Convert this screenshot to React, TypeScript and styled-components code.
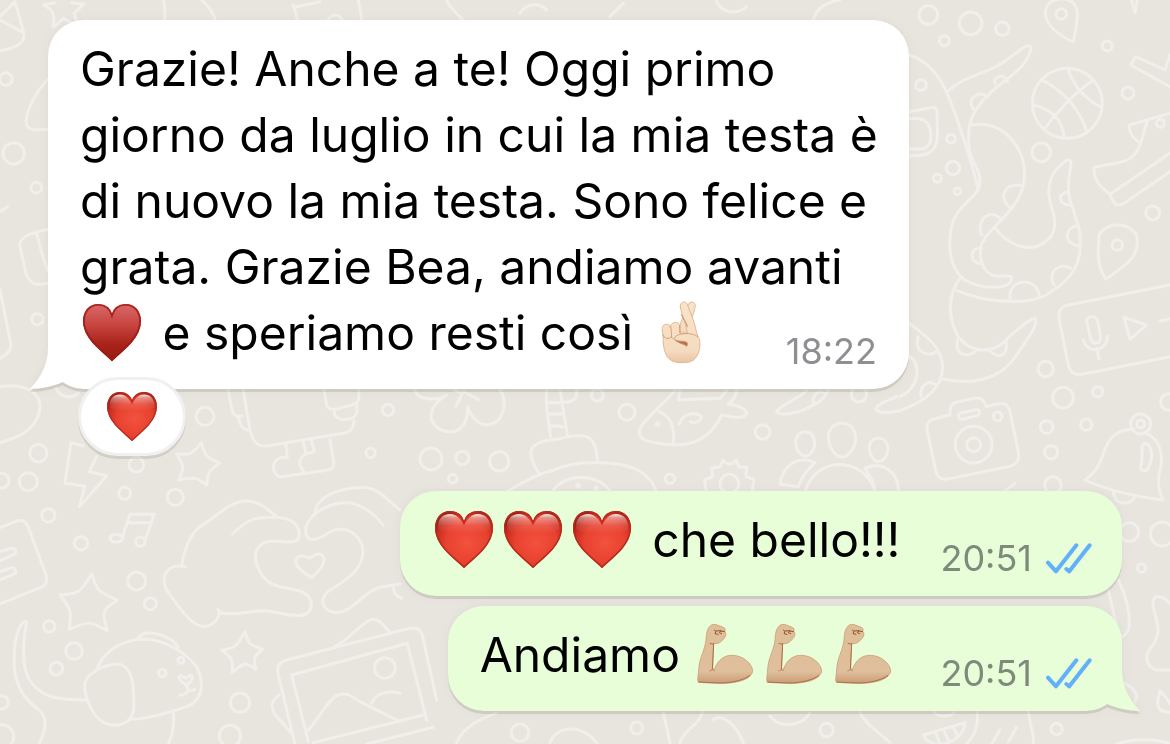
import React from "react";
import styled, { createGlobalStyle } from "styled-components";

const GlobalStyle = createGlobalStyle`
  * { box-sizing: border-box; }
  body { margin: 0; background: #e8e5de; font-family: Inter, "Liberation Sans", sans-serif; }
`;

const Stage = styled.main`
  display: grid;
  min-height: 100vh;
  overflow: hidden;
`;

const WallpaperArt = styled.svg`
  grid-area: 1 / 1;
  width: 100%;
  height: 100%;
  fill: none;
  stroke: #f1efeb;
  stroke-width: 9px;
  stroke-linecap: round;
  stroke-linejoin: round;
`;

const Conversation = styled.section`
  grid-area: 1 / 1;
  display: flex;
  flex-direction: column;
  align-items: flex-start;
  padding: 20px 48px 32px;
`;

const Bubble = styled.article<{ $own?: boolean }>`
  display: flex;
  align-items: flex-end;
  justify-content: space-between;
  gap: 40px;
  align-self: ${(p) => (p.$own ? "flex-end" : "flex-start")};
  padding: 16px ${(p) => (p.$own ? 30 : 32)}px 16px 32px;
  border-radius: 36px;
  background: ${(p) => (p.$own ? "#e7fed8" : "#ffffff")};
  color: ${(p) => (p.$own ? "#7f8b7a" : "#8e8e93")};
  filter: drop-shadow(0 3px 0 rgba(80, 70, 60, 0.14)) drop-shadow(0 0 4px rgba(80, 70, 60, 0.06));
`;

const IncomingBubble = styled(Bubble)`
  display: grid;
  grid-template-columns: minmax(0, 1fr);
  width: min(861px, 100%);
`;

const Message = styled.p`
  grid-area: 1 / 1;
  margin: 0 0 7px;
  color: #000;
  font-size: 48px;
  line-height: 66px;
  white-space: nowrap;
`;

const Meta = styled.div`
  grid-area: 1 / 1;
  justify-self: end;
  align-self: end;
  display: flex;
  align-items: center;
  gap: 14px;
  font-size: 36px;
  line-height: 44px;
`;

const Replies = styled.div`
  display: flex;
  flex-direction: column;
  gap: 10px;
  align-self: stretch;
  margin-top: 35px;
`;

const Reaction = styled.button`
  display: flex;
  align-items: center;
  justify-content: center;
  width: 108px;
  height: 79px;
  margin: -12px 0 0 30px;
  padding: 0;
  border: 3px solid #f0f0f1;
  border-radius: 40px;
  background: #fff;
  filter: drop-shadow(0 3px 0 rgba(80, 70, 60, 0.14));
`;

const Emoji = styled.svg`
  width: 69px;
  height: 66px;
  vertical-align: top;
`;

const SmallEmoji = styled.svg`
  width: 50px;
  height: 49px;
`;

const TickIcon = styled.svg`
  width: 46px;
  height: 31px;
  fill: none;
  stroke: #62affa;
  stroke-width: 12px;
  stroke-linecap: round;
  stroke-linejoin: round;
`;

const TailShape = styled.svg<{ $own?: boolean }>`
  position: absolute;
  bottom: 0;
  ${(p) => (p.$own ? "right: -18px; transform: scaleX(-1);" : "left: -18px;")}
  width: 50px;
  height: 44px;
  fill: ${(p) => (p.$own ? "#e7fed8" : "#ffffff")};
`;

const Tail = ({ own }: { own?: boolean }) => (
  <TailShape $own={own} viewBox="0 0 50 44" aria-hidden="true">
    <path d="M18 0V2C18 20 11 32 0 44C12 44 24 41 33 37L50 20V0Z" />
  </TailShape>
);

const HEART =
  "M32 61C26 55 18 49 12 42C7 36 3 29 3 21C3 11 9 4 18 4C25 4 30 8 32 15C34 8 39 4 46 4C55 4 61 11 61 21C61 29 57 36 52 42C46 49 38 55 32 61Z";

const EmojiPaints = () => (
  <defs>
    <radialGradient id="red" cx="0.55" cy="0.55" r="0.6">
      <stop offset="0" stopColor="#f2523f" />
      <stop offset="0.6" stopColor="#e8412f" />
      <stop offset="0.85" stopColor="#cb2f20" />
      <stop offset="1" stopColor="#9c1d12" />
    </radialGradient>
    <linearGradient id="gloss" x1="0" y1="0" x2="0" y2="1">
      <stop offset="0" stopColor="#fff" stopOpacity="0.9" />
      <stop offset="0.2" stopColor="#fff" stopOpacity="0.45" />
      <stop offset="0.6" stopColor="#fff" stopOpacity="0.12" />
      <stop offset="1" stopColor="#fff" stopOpacity="0" />
    </linearGradient>
    <linearGradient id="suit" x1="0" y1="0" x2="0" y2="1">
      <stop offset="0" stopColor="#d9696a" />
      <stop offset="0.35" stopColor="#c94642" />
      <stop offset="0.7" stopColor="#a9231b" />
      <stop offset="1" stopColor="#981a10" />
    </linearGradient>
    <linearGradient id="suitEdge" x1="0" y1="0" x2="0" y2="1">
      <stop offset="0" stopColor="#ab2422" />
      <stop offset="1" stopColor="#981a10" />
    </linearGradient>
    <linearGradient id="palm" x1="0" y1="0" x2="0" y2="1">
      <stop offset="0" stopColor="#f8e3ca" />
      <stop offset="0.8" stopColor="#f5dcc0" />
      <stop offset="1" stopColor="#e9c4a2" />
    </linearGradient>
    <linearGradient id="arm" x1="0" y1="0" x2="0" y2="1">
      <stop offset="0" stopColor="#dfbf98" />
      <stop offset="0.8" stopColor="#dfbf9c" />
      <stop offset="1" stopColor="#cb9b76" />
    </linearGradient>
  </defs>
);

const HeartArt = () => (
  <>
    <path d={HEART} fill="url(#red)" />
    <path d={HEART} fill="none" stroke="#b82a1c" strokeWidth="1.5" transform="translate(.8 .8) scale(.975)" />
    <path
      d="M6 22C5 12 11 7 18 7C25 7 29 12 32 19C35 12 39 7 46 7C53 7 59 12 58 22C50 29 42 25 32 26C22 25 14 29 6 22Z"
      fill="url(#gloss)"
    />
  </>
);

const RedHeart = () => (
  <Emoji viewBox="0 0 69 66" role="img" aria-label="❤️">
    <HeartArt />
  </Emoji>
);

const HeartSuit = () => (
  <Emoji viewBox="0 0 69 66" role="img" aria-label="♥️">
    <path d={HEART} fill="url(#suit)" />
    <path d={HEART} fill="none" stroke="url(#suitEdge)" strokeWidth="2" transform="translate(1 1) scale(.968)" />
  </Emoji>
);

const CrossedFingers = () => (
  <Emoji viewBox="39 60 207 198" role="img" aria-label="🤞🏻">
    <g stroke="#dcae88" strokeWidth="2.5" strokeLinejoin="round" strokeLinecap="round" fill="url(#palm)">
      <path d="M162 74C167 62 184 64 184 77C182 95 175 108 170 122L158 170H134L140 128C148 108 157 92 162 74Z" />
      <path d="M139 82C135 66 154 60 160 73C166 93 181 120 186 150L191 168C201 180 199 205 192 222C182 245 165 248 142 248C120 248 104 240 96 224C88 206 87 190 87 165C84 148 82 135 95 133C104 131 108 137 109 143C110 124 134 122 137 137L140 160L160 160C157 132 143 105 139 82Z" />
      <path d="M110 141C113 152 113 163 112 172M137 137V158M87 165C90 177 106 178 111 171" fill="none" stroke="#cf9468" />
      <path d="M113 172C117 178 122 177 124 170C132 160 174 155 191 170" fill="none" stroke="#cf9a72" />
      <path d="M122 179C130 186 145 181 158 187C162 190 160 195 158 199C150 190 137 193 122 179Z" fill="#b96f4b" stroke="#c98a64" />
      <path d="M142 104C148 118 158 127 160 140" fill="none" stroke="#b9805a" />
    </g>
  </Emoji>
);

const FlexedArm = () => (
  <Emoji viewBox="48 66 207 198" role="img" aria-label="💪🏼">
    <path
      d="M62 240L66 198C70 168 83 152 87 120C88 95 93 80 105 74L116 73C124 78 140 80 144 86C147 91 139 95 146 98C149 108 141 116 133 124C126 131 116 132 110 130L107 206L112 208C124 178 142 166 165 166C200 166 225 192 227 212C225 235 190 250 130 250C105 250 85 248 64 247Z"
      fill="url(#arm)"
      stroke="#cf9f78"
      strokeWidth="2.5"
      strokeLinejoin="round"
    />
    <g fill="none" strokeLinecap="round" stroke="#b06f48" strokeWidth="3">
      <path d="M99 130C105 133 110 133 110 130L106 208" />
      <path d="M98 213L107 209L113 212" strokeWidth="2" />
      <path d="M112 90L117 94L114 101L123 103M118 93L132 92L127 98L134 101M131 93L143 95" stroke="#8f5534" />
      <path d="M66 246C90 248 110 248 132 249C165 249 200 240 218 227" />
    </g>
  </Emoji>
);

const ReadTicks = () => (
  <TickIcon viewBox="380 185 138 93" role="img" aria-label="Letto">
    <path d="M386 244L410 270L471 192" />
    <path d="M441 263L450 270L511 192" />
  </TickIcon>
);

type Patch = { x: number; y: number; dots: number[][]; lines: string[] };

/* The wallpaper is drawn in patches at three times their final size. */
const PATCHES: Patch[] = [
  {
    x: 900,
    y: 0,
    dots: [
      [85, 45, 28], [212, 70, 34], [307, 86, 20], [133, 122, 15], [484, 42, 16], [622, 138, 15], [63, 255, 16],
      [153, 416, 13], [424, 457, 28], [159, 504, 20], [112, 535, 12], [172, 574, 10], [684, 279, 18], [781, 370, 12],
      [758, 639, 21], [652, 735, 16], [502, 310, 105],
    ],
    lines: [
      "M520 126C480 108 434 76 436 36C440 5 460 0 484 -4C520 -4 534 20 532 50C530 80 525 105 520 126Z",
      "M28 165C90 185 125 235 150 300C175 365 205 450 235 568",
      "M145 272C200 220 270 225 340 165C370 140 400 125 392 150C375 215 310 235 262 288C215 335 200 375 207 440C212 490 240 500 240 545C240 600 150 610 150 720",
      "M215 375C310 360 372 440 374 520C374 600 320 640 285 680C262 702 255 712 252 720",
      "M285 685C330 740 380 750 415 738C465 715 470 680 460 640C445 590 440 570 455 530C470 500 500 475 512 482C518 500 495 540 510 600C530 660 545 700 540 730",
      "M285 250C280 225 320 220 322 245M220 328C195 290 245 270 262 290M332 624C295 595 310 550 362 556M245 705C225 660 270 625 300 655M505 575C470 580 475 615 512 615M535 678C490 680 490 735 540 738",
      "M28 335L100 322C118 322 108 350 112 375C115 430 110 465 50 467H28M28 357C60 352 80 358 88 380C98 415 92 447 60 447H28",
      "M422 238C490 270 540 330 560 394M505 208C520 260 560 300 604 322M580 240C520 280 460 350 432 388M400 315C450 325 490 360 492 412",
      "M695 0L705 38L712 0M810 165L795 210L707 170L692 195L810 260",
      "M810 340L688 375C685 400 705 420 722 430L742 362M722 430C700 500 640 485 582 503C580 540 600 560 630 583L810 460M630 583C640 612 650 622 672 610L810 515",
      "M597 720C590 700 620 675 652 675C690 675 712 700 712 720",
    ],
  },
  {
    x: 900,
    y: 240,
    dots: [
      [437, 387, 23], [489, 473, 31], [593, 455, 15], [440, 561, 19], [559, 554, 17], [453, 637, 20], [459, 735, 25],
      [807, 486, 25], [722, 552, 30], [722, 552, 12], [221, 614, 55], [221, 614, 21], [293, 529, 13],
    ],
    lines: [
      "M150 0C145 60 170 115 215 130C270 150 335 145 335 115C335 100 300 115 275 105C235 85 235 20 252 0",
      "M540 10C545 70 510 120 460 150C400 205 250 185 170 152",
      "M180 115C145 160 140 230 175 290C205 330 255 345 305 312C340 280 380 240 405 235C415 250 395 280 350 345C300 420 220 435 130 418",
      "M175 295C155 350 215 355 228 330M268 332C300 360 325 345 318 305M330 175C325 110 415 110 418 172M462 135C440 95 480 65 512 85M245 25C205 20 210 75 245 70",
      "M28 250C80 290 125 320 128 380C128 450 60 490 0 512M28 350C65 370 60 440 0 470M55 290C40 330 80 355 108 335M62 468C60 430 90 420 108 435",
      "M597 0C590 60 600 90 617 118C660 85 715 60 712 0",
      "M810 135L505 195C480 200 475 215 478 240L505 375C512 400 525 408 550 402L810 350",
      "M560 245C560 225 590 225 593 245L602 290C602 315 575 315 572 295ZM550 300C560 340 620 340 622 288M590 325L597 355M672 232L740 255L690 298ZM780 243L810 236",
      "M150 525L110 535C85 540 78 550 82 575L108 695C113 715 125 722 150 716L325 680C352 674 360 660 355 635L330 515C325 492 310 487 290 492L258 500C250 475 240 470 215 476L170 487C150 492 150 505 150 525Z",
      "M180 520L230 509C242 507 240 525 230 527L190 537C172 540 172 524 180 520Z",
      "M700 567C640 570 625 600 610 640C600 680 580 700 558 718M735 578C790 600 790 660 778 700C772 730 775 750 788 778",
      "M728 615C740 605 752 615 755 640C755 665 748 680 742 690C725 695 718 690 724 670C730 650 722 630 728 615Z",
    ],
  },
  {
    x: 920,
    y: 480,
    dots: [[628, 156, 28], [727, 162, 36], [665, 264, 13], [410, 747, 17]],
    lines: [
      "M495 0C560 30 650 50 728 60M580 35C585 80 630 75 642 55M245 40L285 10",
      "M595 300C620 350 630 400 628 440C625 465 600 475 590 480M565 330L590 440",
      "M750 370C720 340 690 340 702 390C715 440 725 460 695 500C670 530 680 560 710 570H750",
      "M720 632C710 670 705 695 750 697M720 632C735 650 745 660 750 670M615 610C650 630 655 650 645 665",
      "M10 765L135 728C130 780 70 800 40 790C20 785 15 775 10 765M45 755L60 790M70 748L85 780M100 742L112 765",
      "M170 690C180 740 160 770 140 792M325 695C330 740 345 770 340 792M215 792L240 750M265 785L290 742M590 792C640 775 700 775 750 790",
      "M40 690C45 712 90 715 105 695",
    ],
  },
  {
    x: 0,
    y: 440,
    dots: [
      [85, 125, 27], [5, 122, 22], [409, 74, 22], [374, 160, 18], [526, 172, 24], [145, 226, 20], [243, 310, 20],
      [410, 423, 27], [451, 491, 18], [148, 559, 17], [222, 633, 25], [169, 686, 19], [5, 787, 20], [5, 890, 36],
      [487, 699, 11], [543, 661, 9], [720, 788, 29], [690, 888, 32], [1155, 684, 31], [421, 305, 14],
    ],
    lines: [
      "M250 18L213 8L195 130L255 138L238 200L320 108L268 95L290 50",
      "M604 8C615 50 620 52 660 70C620 95 625 100 620 135C590 110 585 112 537 120C555 75 550 75 530 42C570 45 575 45 604 8Z",
      "M330 293C330 280 370 280 368 295C360 312 330 308 330 293ZM368 290L390 223H463L435 300M385 248H452",
      "M0 263L50 243C70 238 78 245 85 262L138 405C143 425 135 438 120 443L0 492M0 335L35 325C50 325 50 340 40 345L0 362M0 395L35 383C50 385 50 400 40 403L0 420",
      "M275 402C292 455 295 455 352 480C305 510 305 515 322 572C265 540 265 545 208 568C215 515 215 510 180 465C235 462 240 460 275 402Z",
      "M545 375C555 320 575 280 600 260C650 230 690 185 735 182C775 182 800 205 828 228M698 282C750 230 770 232 830 232C870 235 898 250 898 285C895 315 860 305 810 303C770 310 755 345 775 385C800 445 850 440 900 453C935 465 945 500 920 522C880 535 840 515 790 512C740 515 720 525 665 520L653 508",
      "M658 515C655 550 620 570 590 553C550 530 520 475 500 450C480 410 500 370 555 380",
      "M945 220C950 165 1020 145 1090 142C1140 145 1160 180 1200 210M1150 256C1120 215 1070 185 1030 188C960 195 915 240 917 275C920 310 950 300 975 285C1020 255 1060 265 1085 310C1105 380 1040 420 990 450C955 475 965 515 1010 518C1060 515 1090 455 1140 442L1200 432",
      "M935 413C905 395 885 375 887 362C892 345 915 345 930 355C945 340 965 335 972 355C975 375 955 395 935 413ZM1180 440C1180 460 1190 470 1205 474",
      "M1310 780L1268 590C1262 566 1250 560 1225 566L860 660C835 668 830 680 835 705L885 912M1280 840L1222 610L875 705L925 905",
      "M925 870C960 830 985 780 1010 767C1035 755 1050 765 1080 785L1200 845M940 908L1270 825M1115 790C1125 760 1160 750 1200 760M1005 620C1060 590 1090 540 1120 538C1145 540 1150 560 1168 575M838 765C805 785 815 815 835 835L875 880M1100 912L1300 862",
      "M735 575C745 615 750 615 788 627C760 650 760 655 767 687C735 665 730 668 697 698C700 655 695 655 665 630C705 625 710 620 735 575Z",
      "M118 912C140 860 145 830 110 805C50 760 35 700 45 610C55 560 70 535 80 548C70 600 65 670 85 715C120 770 160 780 262 780",
      "M290 690C250 715 250 735 258 765C275 830 310 860 355 855C410 845 405 800 398 730C390 680 365 665 330 675C310 680 300 683 290 690C310 630 370 600 430 597C500 600 560 640 590 680C620 740 600 785 560 800C500 820 440 838 395 838M412 595C440 560 520 590 535 622",
      "M558 735C540 725 530 705 545 708L558 715L572 705C582 710 575 728 558 735ZM558 735L565 750M540 765Q560 765 565 750Q575 755 585 748M520 820C525 860 515 890 505 912",
    ],
  },
  {
    x: 180,
    y: 380,
    dots: [[75, 109, 27], [624, 90, 17], [572, 219, 14], [753, 237, 33], [847, 234, 20], [958, 244, 29], [818, 296, 13]],
    lines: [
      "M145 30L155 85C160 105 165 112 185 108M190 30L210 150C220 190 235 202 265 197L490 160C515 155 520 145 522 122M175 112C180 140 190 150 208 150",
      "M432 30L440 75C445 88 455 90 470 87L515 75C535 70 537 65 537 30M462 90C462 115 480 120 500 118C525 115 535 105 530 75",
      "M318 195L322 232C290 230 280 245 280 265C285 290 300 293 320 288L445 270C462 265 463 260 460 240L450 178M370 185L378 222C355 235 355 255 370 272M395 182L403 215L378 222",
      "M705 30C710 60 770 65 800 45C750 75 735 120 780 148C830 170 865 140 863 80C880 130 920 150 955 120C980 90 975 50 960 30M828 78L850 35L895 58M822 30L850 40",
      "M1100 30C1095 70 1105 120 1112 170M1105 68H1140M1108 102H1140M1112 138H1140M1080 285C1055 250 1045 210 1060 200C1080 180 1110 180 1140 176M985 333C1030 305 1080 282 1112 272",
    ],
  },
  {
    x: 550,
    y: 380,
    dots: [
      [142, 45, 18], [231, 97, 24], [323, 132, 4], [638, 156, 22], [360, 296, 14], [538, 311, 28], [927, 43, 23],
      [84, 317, 4], [138, 325, 4],
    ],
    lines: [
      "M30 30L52 165M80 30C82 60 70 68 30 66M30 102H40M30 140H48M30 176C60 168 90 165 110 170C135 180 140 210 142 240",
      "M0 275C60 245 130 245 180 250C250 255 300 280 318 333M10 330C50 280 140 280 180 333",
      "M375 32C340 75 290 110 270 145C260 175 285 185 320 188C400 205 470 195 515 105C545 110 580 120 590 100C585 80 555 75 535 72C550 60 560 45 560 30M328 95C365 110 375 150 370 195M390 32L385 60L510 55L530 32M388 133C400 95 440 95 455 112C445 130 430 130 420 125",
      "M770 32C740 60 690 75 680 95C690 110 750 100 790 75C820 60 830 45 835 30M790 70C785 40 810 30 825 40M1040 50C1010 65 980 70 978 88C990 104 1030 96 1050 92",
      "M470 340L464 300L488 290L485 265L510 260L520 240C530 256 546 256 558 240L568 262L590 262L588 290L612 298L606 340",
      "M765 156C745 156 735 175 737 192C740 215 755 228 765 228C778 228 792 215 794 192C794 170 785 156 765 156ZM876 130C848 130 832 152 836 180C840 210 860 231 874 231C892 231 914 210 917 180C918 152 904 130 876 130ZM985 175C965 175 956 190 958 208C962 232 975 245 984 245C998 245 1012 232 1014 208C1014 190 1005 175 985 175Z",
      "M765 340C790 225 945 225 978 340M745 320L690 312C700 250 750 225 795 248C770 270 755 290 745 320ZM975 333C970 300 960 290 945 265C1000 240 1050 280 1045 340",
    ],
  },
  {
    x: 0,
    y: 0,
    dots: [[18, 237, 19], [41, 460, 32], [109, 563, 16], [112, 958, 17], [115, 1360, 26]],
    lines: [
      "M0 50L45 5L72 100C75 130 50 145 0 152M0 60L70 98M130 15C160 30 165 40 160 82L190 55L235 80L222 40L252 12L215 8M165 8L130 15",
      "M490 0C497 20 495 40 493 65M605 0C630 20 640 40 648 65M880 15L895 65M885 22L960 5M1075 0L1087 65M985 62C990 40 1020 40 1028 62",
      "M145 237C110 270 80 330 78 365C80 395 110 390 145 388M0 635L22 620M145 688C90 700 55 710 60 740L78 820C90 860 120 855 145 850M110 700C120 740 130 780 145 815",
      "M0 870L32 1030C35 1050 20 1065 0 1075M0 1160C60 1150 120 1170 120 1220C115 1290 50 1315 0 1328M168 1165C180 1190 210 1200 235 1180",
      "M1340 0C1350 25 1370 40 1390 60M1560 40C1580 10 1620 5 1640 30M1830 50L1870 10M2150 5C2170 40 2210 45 2240 20M2440 60C2450 20 2490 5 2520 0",
    ],
  },
  {
    x: 450,
    y: 706,
    dots: [[210, 80, 26], [560, 66, 18], [1130, 72, 20]],
    lines: [
      "M20 110C40 60 90 40 140 20M300 110C320 60 390 50 440 110M640 20L660 110M760 10C750 60 700 70 690 110M790 40C820 20 860 60 880 110M960 30C990 70 1060 60 1080 20M1230 20C1250 60 1290 80 1320 110",
    ],
  },
];

const Wallpaper = () => (
  <WallpaperArt viewBox="0 0 1170 744" preserveAspectRatio="xMidYMid slice" aria-hidden="true">
    {PATCHES.map((patch, i) => (
      <g key={i} transform={`translate(${patch.x} ${patch.y}) scale(.3333)`}>
        {patch.dots.map(([cx, cy, r], j) => (
          <circle key={j} cx={cx} cy={cy} r={r} />
        ))}
        {patch.lines.map((d, j) => (
          <path key={j} d={d} />
        ))}
      </g>
    ))}
  </WallpaperArt>
);

export default function App() {
  return (
    <>
      <GlobalStyle />
      <Stage>
        <Wallpaper />
        <Conversation aria-label="Chat">
          <IncomingBubble>
            <Tail />
            <Message>
              Grazie! Anche a te! Oggi primo
              <br />
              giorno da luglio in cui la mia testa è
              <br />
              di nuovo la mia testa. Sono felice e
              <br />
              grata. Grazie Bea, andiamo avanti
              <br />
              <HeartSuit /> e speriamo resti così <CrossedFingers />
            </Message>
            <Meta>
              <time>18:22</time>
            </Meta>
          </IncomingBubble>
          <Reaction type="button" aria-label="Reazione ❤️">
            <SmallEmoji viewBox="3 4 58 57" aria-hidden="true">
              <EmojiPaints />
              <HeartArt />
            </SmallEmoji>
          </Reaction>
          <Replies>
            <Bubble $own>
              <Message>
                <RedHeart />
                <RedHeart />
                <RedHeart /> che bello!!!
              </Message>
              <Meta>
                <time>20:51</time>
                <ReadTicks />
              </Meta>
            </Bubble>
            <Bubble $own>
              <Message>
                Andiamo <FlexedArm />
                <FlexedArm />
                <FlexedArm />
              </Message>
              <Meta>
                <time>20:51</time>
                <ReadTicks />
              </Meta>
              <Tail own />
            </Bubble>
          </Replies>
        </Conversation>
      </Stage>
    </>
  );
}
